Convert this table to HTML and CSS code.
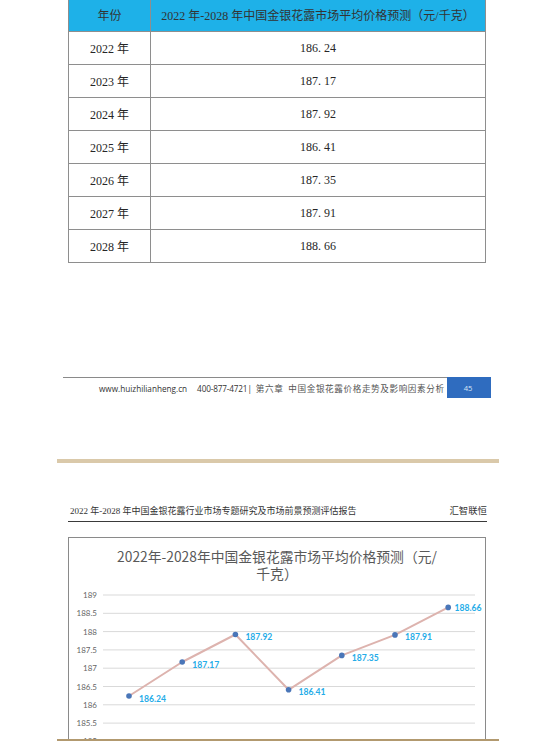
FILE: index.html
```html
<!DOCTYPE html>
<html lang="zh-CN">
<head>
<meta charset="utf-8">
<title>金银花露市场平均价格预测</title>
<link rel="stylesheet" href="styles.css">
</head>
<body>
<div class="page page-top">
  <table class="price-table">
    <colgroup><col class="col-year"><col></colgroup>
    <thead>
      <tr><th>年份</th><th>2022 年-2028 年中国金银花露市场平均价格预测（元/千克）</th></tr>
    </thead>
    <tbody>
      <tr><td>2022 年</td><td>186. 24</td></tr>
      <tr><td>2023 年</td><td>187. 17</td></tr>
      <tr><td>2024 年</td><td>187. 92</td></tr>
      <tr><td>2025 年</td><td>186. 41</td></tr>
      <tr><td>2026 年</td><td>187. 35</td></tr>
      <tr><td>2027 年</td><td>187. 91</td></tr>
      <tr><td>2028 年</td><td>188. 66</td></tr>
    </tbody>
  </table>
  <div class="page-footer">
    <div class="footer-text">
      <span class="site">www.huizhilianheng.cn</span>
      <span class="phone">400-877-4721|</span>
      <span class="chapter">第六章</span>
      <span class="chapter-title">中国金银花露价格走势及影响因素分析</span>
    </div>
    <div class="page-num">45</div>
  </div>
</div>
<div class="page-gap"></div>
<div class="page page-bottom">
  <div class="report-header">
    <span class="report-title">2022 年-2028 年中国金银花露行业市场专题研究及市场前景预测评估报告</span>
    <span class="report-brand">汇智联恒</span>
  </div>
  <div class="chart-box">
    <div class="chart-title"><span class="title-line">2022年-2028年中国金银花露市场平均价格预测（元/</span><span class="title-line">千克）</span></div>
    <svg class="chart-svg" width="416" height="200" viewBox="0 0 416 200">
      <g class="grid">
        <line x1="34" x2="406" y1="14" y2="14"/>
        <line x1="34" x2="406" y1="32.3" y2="32.3"/>
        <line x1="34" x2="406" y1="50.6" y2="50.6"/>
        <line x1="34" x2="406" y1="68.9" y2="68.9"/>
        <line x1="34" x2="406" y1="87.2" y2="87.2"/>
        <line x1="34" x2="406" y1="105.5" y2="105.5"/>
        <line x1="34" x2="406" y1="123.8" y2="123.8"/>
        <line x1="34" x2="406" y1="142.1" y2="142.1"/>
        <line x1="34" x2="406" y1="160.4" y2="160.4"/>
      </g>
      <g class="axis-labels">
        <text x="28" y="17">189</text>
        <text x="28" y="35.3">188.5</text>
        <text x="28" y="53.6">188</text>
        <text x="28" y="71.9">187.5</text>
        <text x="28" y="90.2">187</text>
        <text x="28" y="108.5">186.5</text>
        <text x="28" y="126.8">186</text>
        <text x="28" y="145.1">185.5</text>
        <text x="28" y="163.4">185</text>
      </g>
      <polyline class="series" points="60,115 113.2,81 166.4,53.5 219.6,108.8 272.8,74.4 326,53.9 379.2,26.4"/>
      <g class="markers">
        <circle cx="60" cy="115" r="2.8"/>
        <circle cx="113.2" cy="81" r="2.8"/>
        <circle cx="166.4" cy="53.5" r="2.8"/>
        <circle cx="219.6" cy="108.8" r="2.8"/>
        <circle cx="272.8" cy="74.4" r="2.8"/>
        <circle cx="326" cy="53.9" r="2.8"/>
        <circle cx="379.2" cy="26.4" r="2.8"/>
      </g>
      <g class="data-labels">
        <text x="70" y="120.5">186.24</text>
        <text x="123.2" y="86.5">187.17</text>
        <text x="176.4" y="59">187.92</text>
        <text x="229.6" y="114.3">186.41</text>
        <text x="282.8" y="79.9">187.35</text>
        <text x="336" y="59.4">187.91</text>
        <text x="385.5" y="30">188.66</text>
      </g>
    </svg>
  </div>
</div>
<div class="page-edge"></div>
</body>
</html>
```

FILE: styles.css
```css
html, body {
  margin: 0;
  padding: 0;
  background: #ffffff;
}

.page-top {
  height: 459px;
  overflow: hidden;
}

.price-table {
  margin-left: 68px;
  width: 418px;
  table-layout: fixed;
  border-collapse: collapse;
  font-family: "Liberation Serif", "Noto Sans CJK SC", serif;
  font-size: 12px;
  color: #262626;
}

.col-year {
  width: 82px;
}

.price-table th,
.price-table td {
  border: 1px solid #8e8e8e;
  padding: 0;
  height: 32px;
  text-align: center;
  vertical-align: middle;
  font-weight: normal;
}

.price-table th {
  background: #1eb1e8;
  color: #333333;
  border-top: none;
  height: 29px;
  padding-bottom: 2px;
}

.page-footer {
  display: flex;
  margin-top: 114px;
  margin-left: 63px;
  width: 428px;
}

.footer-text {
  flex: 1;
  display: flex;
  align-items: center;
  height: 20px;
  border-top: 1px solid #8a8a8a;
  padding-left: 36px;
  color: #333333;
  white-space: nowrap;
}

.site,
.phone {
  font-family: "Open Sans", "Liberation Sans", sans-serif;
  font-size: 8.2px;
}

.phone {
  margin-left: 10px;
  letter-spacing: -0.15px;
}

.chapter,
.chapter-title {
  font-family: "Noto Sans CJK SC", sans-serif;
  font-size: 8.6px;
  color: #555555;
  letter-spacing: 0.6px;
}

.chapter {
  margin-left: 4px;
}

.chapter-title {
  margin-left: 5px;
}

.page-num {
  width: 44px;
  height: 21px;
  background: #2f6cbf;
  color: #d6e4f5;
  font-family: "Open Sans", "Liberation Sans", sans-serif;
  font-size: 7.6px;
  display: flex;
  align-items: center;
  justify-content: center;
  padding-right: 2px;
  box-sizing: border-box;
}

.page-gap {
  margin-left: 57px;
  width: 442px;
  height: 4px;
  background: #dac9aa;
}

.page-bottom {
  height: 276px;
  overflow: hidden;
}

.report-header {
  display: flex;
  justify-content: space-between;
  align-items: flex-end;
  margin-top: 42px;
  margin-left: 68px;
  width: 419px;
  padding: 0 0 4px 2px;
  box-sizing: border-box;
  border-bottom: 1px solid #3a3a3a;
  font-family: "Liberation Serif", "Noto Sans CJK SC", serif;
  font-size: 9px;
  line-height: 12px;
  color: #333333;
}

.report-brand {
  font-size: 9.4px;
}

.chart-box {
  margin-top: 15px;
  margin-left: 68px;
  width: 418px;
  height: 300px;
  box-sizing: border-box;
  border: 1px solid #8a8a8a;
  border-bottom: none;
}

.chart-title {
  padding-top: 10px;
  height: 33px;
  display: flex;
  flex-direction: column;
  align-items: center;
  font-family: "Noto Sans CJK SC", sans-serif;
  font-size: 13.8px;
  color: #595959;
}

.title-line {
  display: block;
  height: 17px;
  line-height: 16px;
  white-space: nowrap;
}

.chart-svg {
  display: block;
}

.grid line {
  stroke: #d9d9d9;
  stroke-width: 1;
}

.axis-labels text {
  font-family: "Lato", "Open Sans", sans-serif;
  font-size: 8px;
  fill: #666666;
  text-anchor: end;
}

.series {
  fill: none;
  stroke: #ddb3ae;
  stroke-width: 2;
  stroke-linejoin: round;
}

.markers circle {
  fill: #4a76b8;
}

.data-labels text {
  font-family: "Lato", "Open Sans", sans-serif;
  font-size: 8.6px;
  font-weight: 700;
  fill: #25ace8;
}

.page-edge {
  margin-left: 57px;
  width: 442px;
  height: 2px;
  background: #b2996f;
}
```
